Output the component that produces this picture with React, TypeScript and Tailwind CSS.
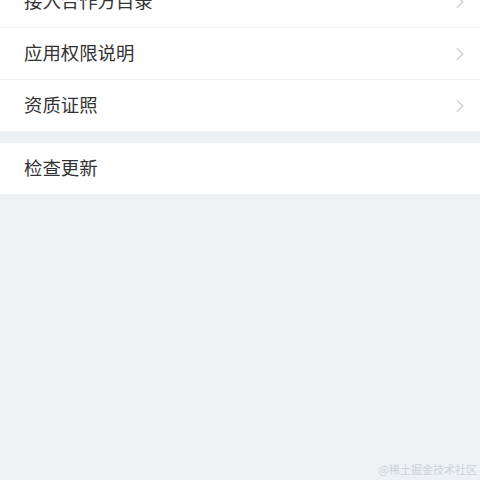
import { ChevronRight } from 'lucide-react';

const groups = [
  [
    { name: '接入合作方目录', arrow: true },
    { name: '应用权限说明', arrow: true },
    { name: '资质证照', arrow: true },
  ],
  [{ name: '检查更新', arrow: false }],
];

const App = () => {
  return (
    <div
      className="relative h-[480px] w-[480px] overflow-hidden bg-[#eef1f4]"
      style={{ fontFamily: '"Noto Sans CJK SC", "Noto Sans", sans-serif' }}
    >
      <div className="-mt-[24px] flex flex-col gap-[12px]">
        {groups.map((group, gi) => (
          <ul key={gi} className="bg-white">
            {group.map((item, i) => (
              <li
                key={item.name}
                className={
                  'flex h-[51px] items-center justify-between pl-[24px] pr-[9px] ' +
                  (i < group.length - 1 ? 'box-content border-b border-[#f0f0f0]' : '')
                }
              >
                <span className="mb-[3px] text-[18.4px] leading-none text-[#333333]">{item.name}</span>
                {item.arrow && <ChevronRight size={22} strokeWidth={1.4} className="text-[#cfcfcf]" />}
              </li>
            ))}
          </ul>
        ))}
      </div>

      {/* Watermark */}
      <div
        className="absolute right-[3px] bottom-[3px] text-[11px] text-[#cdd1d7]"
        style={{ fontFamily: '"Noto Sans CJK SC", serif' }}
      >
        @稀土掘金技术社区
      </div>
    </div>
  );
};

export default App;
